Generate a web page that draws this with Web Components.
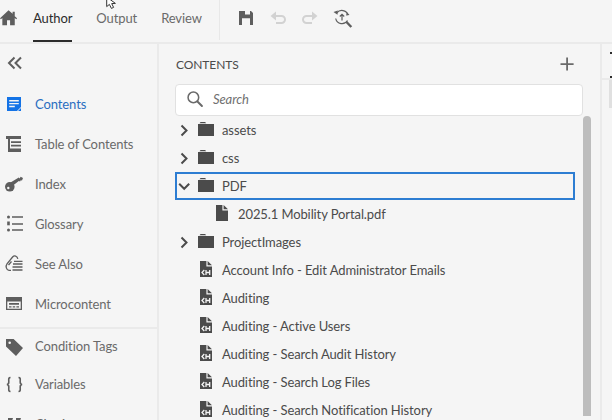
<!DOCTYPE html>
<html>
<head>
<meta charset="utf-8">
<style>
  html, body { margin: 0; height: 100%; overflow: hidden; background: #f5f5f5; }
  body { font-family: Lato, "Open Sans", sans-serif; color: #4b4b4b; letter-spacing: -0.1px; }
</style>
</head>
<body>
<app-shell>
  <top-bar slot="top"></top-bar>
  <side-nav slot="side">
    <nav-item icon="contents" active>Contents</nav-item>
    <nav-item icon="toc">Table of Contents</nav-item>
    <nav-item icon="key">Index</nav-item>
    <nav-item icon="glossary">Glossary</nav-item>
    <nav-item icon="seealso">See Also</nav-item>
    <nav-item icon="micro">Microcontent</nav-item>
    <nav-item icon="tag" divided>Condition Tags</nav-item>
    <nav-item icon="braces">Variables</nav-item>
    <nav-item icon="quote">Citations</nav-item>
  </side-nav>
  <contents-panel slot="main">
    <tree-row kind="folder" arrow="right">assets</tree-row>
    <tree-row kind="folder" arrow="right">css</tree-row>
    <tree-row kind="folder" arrow="down" selected>PDF</tree-row>
    <tree-row kind="file" depth="1">2025.1 Mobility Portal.pdf</tree-row>
    <tree-row kind="folder" arrow="right">ProjectImages</tree-row>
    <tree-row kind="doc">Account Info - Edit Administrator Emails</tree-row>
    <tree-row kind="doc">Auditing</tree-row>
    <tree-row kind="doc">Auditing - Active Users</tree-row>
    <tree-row kind="doc">Auditing - Search Audit History</tree-row>
    <tree-row kind="doc">Auditing - Search Log Files</tree-row>
    <tree-row kind="doc">Auditing - Search Notification History</tree-row>
  </contents-panel>
  <side-rail slot="rail"></side-rail>
</app-shell>
<script>
// icon set, all on a 20x20 box
const ICONS = {
  home: '<path fill="#5e5e5e" d="M9.5 1.5 0 10.4l1 1.1 1.6-1.4V18h5.2v-5.4h3.4V18h5.2v-7.900l1.600 1.400 1-1.100-2.600-2.400V3h-2.400v2.400z"/>',
  save: '<path fill="#5e5e5e" fill-rule="evenodd" d="M3 3h12l2 2v12H3zM9 3v3.500h5V3zM6 10.300V17h8v-6.700z"/>',
  undo: '<path fill="none" stroke="#d2d2d2" stroke-width="2" d="M5 8h8.500a3.500 3.500 0 0 1 0 7H8"/><path fill="#d2d2d2" d="M8 3.500v9L2.500 8z"/>',
  redo: '<path fill="none" stroke="#d2d2d2" stroke-width="2" d="M15 8H6.500a3.500 3.500 0 0 0 0 7H12"/><path fill="#d2d2d2" d="M12 3.500v9L17.500 8z"/>',
  find: '<g fill="none" stroke="#5e5e5e" stroke-width="1.200"><path d="M4.800 5A6.400 6.400 0 0 1 16 7"/><path d="M15.500 12.500A6.400 6.400 0 0 1 3.700 10.500"/><path d="M10 12.500V6.500M7.800 8.500 10 6.300l2.200 2.200"/></g><path stroke="#5e5e5e" stroke-width="2.400" d="m14.500 14 4.800 5"/><path fill="#5e5e5e" d="M1.500 4 5.800 2.500l-.3 4.300zM17.500 7l-3.500.5 1-3.200z"/>',
  search: '<circle cx="8.200" cy="8.200" r="5.900" fill="none" stroke="#6a6a6a" stroke-width="1.700"/><path stroke="#6a6a6a" stroke-width="2.200" stroke-linecap="round" d="m12.700 12.700 5 5"/>',
  plus: '<path fill="#6a6a6a" d="M9.200 3.500H11v5.700h5.600V11H11v5.600H9.200V11H3.500V9.200h5.700z"/>',
  collapse: '<path fill="none" stroke="#5e5e5e" stroke-width="2" d="M9.500 4.500 4 10l5.500 5.500M16 4.500 10.500 10l5.500 5.500"/>',
  contents: '<path fill="#1473e6" fill-rule="evenodd" d="M4 3h14v10l-4 4H4zM6.200 6v1.400h9.600V6zm0 2.900v1.400h9.600V8.900zm0 2.900v1.400h5.600v-1.400z"/><path fill="#1473e6" d="M18 14v3h-3z"/>',
  toc: '<path fill="#5e5e5e" d="M3 2h15v3H3zM5 5h2v9.500H5zM8 7.300h10v1.700H8zM8 10.800h10v1.700H8zM5 14.500h13V18H5z"/>',
  key: '<circle cx="6.800" cy="12.800" r="4.800" fill="#5e5e5e"/><circle cx="5.300" cy="14" r="1.200" fill="#f5f5f5"/><path fill="#5e5e5e" d="m7.500 8.400 8.300-5 .9 1 .9-1.700 2.400 1.300-1 2.400-1.300-.2-.6 1.300-1.300-.5-5.800 4.400z"/>',
  glossary: '<g fill="#5e5e5e"><path d="M9 2.300h11v1.500H9zM9 9.300h11v1.500H9zM9 15.300h11v1.500H9z"/><circle cx="5.500" cy="3" r="1.500"/><rect x="4.200" y="7.500" width="2.600" height="3.800"/><circle cx="5.500" cy="16" r="1.500"/></g>',
  seealso: '<g fill="none" stroke="#5e5e5e" stroke-width="1.300"><path d="M14.800 4.800C14.300 1.800 11.300 1 9.600 3L4 9.800c-1.800 2.400-.6 6.400 2 6.600h2"/><path d="M8.500 7.500 5.500 11"/><path d="M11 7.300h8.500M10 10h9.500M9.500 13h10M9.500 16h10"/></g>',
  micro: '<path fill="#5e5e5e" fill-rule="evenodd" d="M3 3h16v13H3zM4.300 7.500v7.200h13.400V7.500z"/><path fill="#5e5e5e" d="M6 9h10v1.700H6zM6 12.300h2.500v1.300H6zM9.700 12.300h2.500v1.300H9.700zM13.400 12.300H16v1.300h-2.600z"/>',
  tag: '<path fill="#5e5e5e" fill-rule="evenodd" d="M3 2h7.600l9.400 9-7 8-10-9.400zM6.700 4.500a1.300 1.300 0 1 0 0 2.600 1.300 1.300 0 0 0 0-2.600z"/>',
  braces: '<path fill="none" stroke="#5e5e5e" stroke-width="1.600" d="M7.500 3.500C5.200 3.500 5.800 5.500 5.800 8c0 1.400-.6 2.500-2 2.500 1.400 0 2 1.100 2 2.500 0 2.500-.6 4.500 1.700 4.500M15.500 3.500c2.300 0 1.700 2 1.700 4.500 0 1.400.6 2.500 2 2.500-1.400 0-2 1.100-2 2.500 0 2.500.6 4.500-1.700 4.500"/>',
  quote: '<path fill="#5e5e5e" d="M5 4h5L8 10h2v5H5v-5zM13 4h5l-2 6h2v5h-5v-5z"/>',
  folder: '<path fill="#4b4b4b" d="M2.500 3.300 3.600 2h4.500l1.100 1.300zM1 4h16v12H1z"/>',
  file: '<path fill="#4b4b4b" d="M2 1h6.400v5.400H14V17H2zM9.600 1 14 5.200H9.600z"/>',
  doc: '<path fill="#4b4b4b" d="M2 1h6.400v5.400H14V17H2zM9.600 1 14 5.200H9.600z"/><path fill="none" stroke="#f5f5f5" stroke-width="1.300" d="M6.300 10 4 12.500 6.300 15M8 10v5M11.700 10v5M8 12.500h3.700"/>',
  right: '<path fill="none" stroke="#4b4b4b" stroke-width="2" d="m3.500 1.500 5 5-5 5"/>',
  down: '<path fill="none" stroke="#4b4b4b" stroke-width="2" d="m1.200 3.800 5 5 5-5"/>'
};

class UiIcon extends HTMLElement {
  connectedCallback() {
    const size = this.getAttribute('size') || 20;
    const box = this.getAttribute('box') || '0 0 20 20';
    const root = this.shadowRoot || this.attachShadow({mode: 'open'});
    root.innerHTML = `<style>
      :host { display: inline-flex; flex: none; width: ${size}px; height: ${size}px; }
      svg { display: block; width: 100%; height: 100%; overflow: visible; }
    </style><svg viewBox="${box}">${ICONS[this.getAttribute('name')] || ''}</svg>`;
  }
}
customElements.define('ui-icon', UiIcon);

class AppShell extends HTMLElement {
  constructor() {
    super();
    this.attachShadow({mode: 'open'}).innerHTML = `<style>
      :host { display: grid; grid-template-columns: 157px 1fr 12px; grid-template-rows: 42px 1fr; width: 612px; height: 420px; overflow: hidden; position: relative; }
      .top { grid-column: 1 / -1; }
      .cursor { position: absolute; left: 106px; top: -3px; width: 14px; height: 12px; }
    </style>
    <div class="top"><slot name="top"></slot></div>
    <slot name="side"></slot>
    <slot name="main"></slot>
    <slot name="rail"></slot>
    <svg class="cursor" viewBox="0 0 14 12"><path d="M0.700 0V9.600L3.400 7.400 5.400 11.400 7.600 10.400 5.700 6.600 9.400 6.400Z" fill="#fff" stroke="#333" stroke-width="1"/></svg>`;
  }
}
customElements.define('app-shell', AppShell);

class TopBar extends HTMLElement {
  constructor() {
    super();
    this.attachShadow({mode: 'open'}).innerHTML = `<style>
      :host { display: flex; align-items: stretch; height: 42px; font-size: 13px; color: #6a6a6a; background: #f5f5f5; }
      .home { padding-top: 9px; width: 33px; box-sizing: border-box; }
      .tab { margin-right: 24px; padding-top: 10px; box-sizing: border-box; height: 42px; }
      .tab.on { color: #2c2c2c; border-bottom: 2px solid #2c2c2c; }
      .sep { width: 1px; background: #e8e8e8; height: 40px; margin-left: -7px; margin-right: 16px; }
      .tools { display: flex; gap: 12px; padding-top: 8px; }
    </style>
    <div class="home"><ui-icon name="home" size="18"></ui-icon></div>
    <div class="tab on">Author</div>
    <div class="tab">Output</div>
    <div class="tab">Review</div>
    <div class="sep"></div>
    <div class="tools">
      <ui-icon name="save"></ui-icon>
      <ui-icon name="undo"></ui-icon>
      <ui-icon name="redo"></ui-icon>
      <ui-icon name="find"></ui-icon>
    </div>`;
  }
}
customElements.define('top-bar', TopBar);

class SideNav extends HTMLElement {
  constructor() {
    super();
    this.attachShadow({mode: 'open'}).innerHTML = `<style>
      :host { display: block; border-top: 2px solid #eaeaea; border-right: 2px solid #eaeaea; width: 157px; overflow: hidden; }
      .collapse { padding: 9px 0 0 5px; height: 30px; box-sizing: border-box; margin-bottom: 10px; }
    </style>
    <div class="collapse"><ui-icon name="collapse" size="20"></ui-icon></div>
    <slot></slot>`;
  }
}
customElements.define('side-nav', SideNav);

class NavItem extends HTMLElement {
  constructor() {
    super();
    this.attachShadow({mode: 'open'});
  }
  connectedCallback() {
    const active = this.hasAttribute('active');
    this.shadowRoot.innerHTML = `<style>
      :host { display: flex; align-items: center; gap: 12px; height: 40px; padding-left: 3px; font-size: 13px; color: ${active ? '#2a6ec0' : '#6a6a6a'}; }
      :host([divided]) { height: 35px; border-top: 2px solid #eaeaea; margin-top: 3px; }
      .label { padding-bottom: 1px; }
    </style>
    <ui-icon name="${this.getAttribute('icon')}" size="20"></ui-icon><span class="label"><slot></slot></span>`;
  }
}
customElements.define('nav-item', NavItem);

class ContentsPanel extends HTMLElement {
  constructor() {
    super();
    this.attachShadow({mode: 'open'}).innerHTML = `<style>
      :host { display: block; border-top: 2px solid #eaeaea; padding: 0 17px 0 16px; min-width: 0; margin-left: 2px; overflow: hidden; position: relative; }
      .head { display: flex; justify-content: space-between; align-items: center; height: 40px; font-size: 12px; color: #4b4b4b; padding: 0 6px 0 1px; }
      .search { display: flex; align-items: center; gap: 9px; height: 32px; box-sizing: border-box; background: #fff; border: 1px solid #e1e1e1; border-radius: 4px; padding: 0 0 2px 10px; font-size: 13px; font-style: italic; color: #707070; }
      .body { display: flex; gap: 8px; margin-right: -8px; }
      .list { flex: 1; min-width: 0; }
      .thumb { width: 8px; height: 300px; flex: none; background: #bdbdbd; border-radius: 4px 4px 0 0; }
    </style>
    <div class="head"><span>CONTENTS</span><ui-icon name="plus" size="20"></ui-icon></div>
    <div class="search"><ui-icon name="search" size="18"></ui-icon>Search</div>
    <div class="body"><div class="list"><slot></slot></div><div class="thumb"></div></div>`;
  }
}
customElements.define('contents-panel', ContentsPanel);

class TreeRow extends HTMLElement {
  constructor() {
    super();
    this.attachShadow({mode: 'open'});
  }
  connectedCallback() {
    const kind = this.getAttribute('kind');
    const arrow = this.getAttribute('arrow');
    const depth = Number(this.getAttribute('depth') || 0);
    this.shadowRoot.innerHTML = `<style>
      :host { display: flex; align-items: center; height: 28px; box-sizing: border-box; font-size: 13px; color: #4b4b4b; white-space: nowrap; }
      :host([selected]) { outline: 2px solid #2d7dd2; outline-offset: -2px; }
      .arrow { width: 22px; flex: none; display: flex; padding-left: 3px; box-sizing: border-box; }
      .gap { flex: none; width: ${depth ? 39 : 23}px; }
      .ic { display: flex; flex: none; margin-right: ${kind === 'folder' ? 5 : 4}px; }
      .label { padding-bottom: 1px; }
    </style>
    ${arrow ? `<div class="arrow"><ui-icon name="${arrow}" size="12" box="0 0 12 12"></ui-icon></div>` : `<div class="gap"></div>`}
    <div class="ic"><ui-icon name="${kind}" size="20"></ui-icon></div>
    <span class="label"><slot></slot></span>`;
  }
}
customElements.define('tree-row', TreeRow);

class SideRail extends HTMLElement {
  constructor() {
    super();
    this.attachShadow({mode: 'open'}).innerHTML = `<style>
      :host { display: block; border-top: 2px solid #eaeaea; border-left: 2px solid #eaeaea; box-sizing: border-box; overflow: hidden; }
      .head { height: 34px; border-bottom: 2px solid #eaeaea; position: relative; }
      .dot { position: absolute; right: 0; width: 2px; height: 2px; background: #2c2c2c; }
      .a { top: 8px; } .b { top: 32px; }
      .thumb { width: 3px; height: 28px; background: #e0e0e0; margin-left: 7px; }
    </style>
    <div class="head"><div class="dot a"></div><div class="dot b"></div></div>
    <div class="thumb"></div>`;
  }
}
customElements.define('side-rail', SideRail);
</script>
</body>
</html>
